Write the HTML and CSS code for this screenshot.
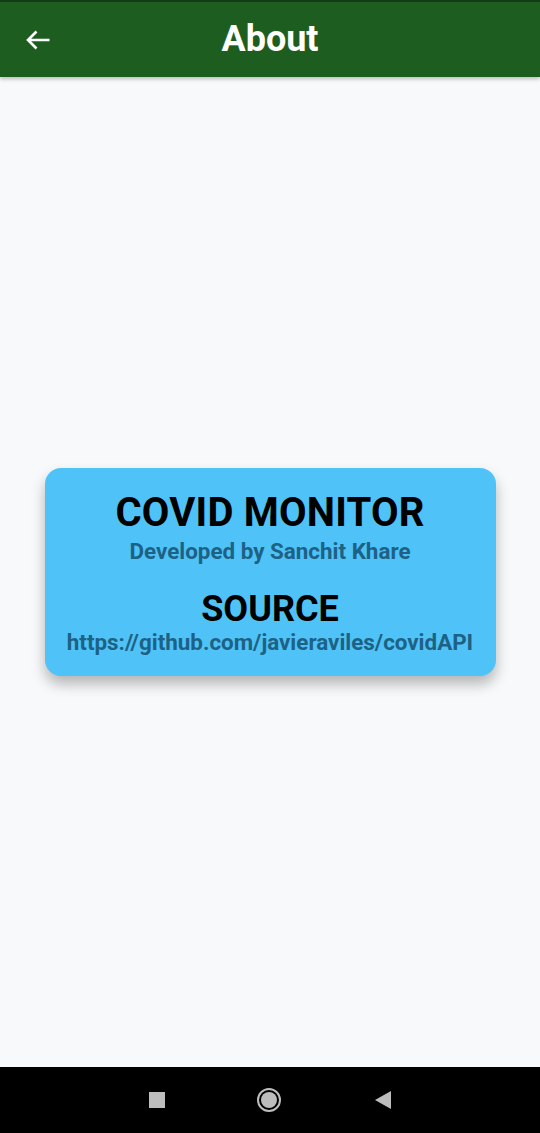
FILE: index.html
```html
<!DOCTYPE html>
<html>
<head>
<meta charset="utf-8">
<link rel="stylesheet" href="styles.css">
</head>
<body>
<div class="screen">
  <header class="appbar">
    <svg class="back" width="26" height="20" viewBox="0 0 26 20"><path d="M3 10H24.5M11.5 1.5L3 10l8.5 8.5" fill="none" stroke="#fff" stroke-width="2.6" stroke-linecap="butt" stroke-linejoin="miter"/></svg>
    <h1 class="title">About</h1>
    <span></span>
  </header>
  <main class="content">
    <div class="card">
      <div class="heading">COVID MONITOR</div>
      <div class="sub first">Developed by Sanchit Khare</div>
      <div class="heading second">SOURCE</div>
      <div class="sub last">https://github.com/javieraviles/covidAPI</div>
    </div>
  </main>
  <footer class="navbar">
    <span class="nav-square"></span>
    <span class="nav-circle"><span class="nav-dot"></span></span>
    <svg class="nav-back" width="16" height="18" viewBox="0 0 16 18"><path d="M16 0V18L0 9Z" fill="#bdbdbd"/></svg>
  </footer>
</div>
</body>
</html>
```
FILE: styles.css
```css
html, body {
  margin: 0;
  padding: 0;
}
body {
  font-family: Roboto, "Liberation Sans", sans-serif;
  background: #f8f9fa;
}
.screen {
  width: 540px;
  height: 1133px;
  display: flex;
  flex-direction: column;
}
.appbar {
  height: 77px;
  background: #1d5e20;
  border-top: 2px solid #123d14;
  box-sizing: border-box;
  display: grid;
  grid-template-columns: 1fr auto 1fr;
  align-items: start;
  box-shadow: 0 2px 4px rgba(0,0,0,0.25);
  z-index: 1;
}
.back {
  margin-left: 25px;
  margin-top: 28px;
}
.title {
  margin: 19px 0 0;
  text-align: center;
  color: #fff;
  font-size: 36px;
  font-weight: 700;
  line-height: 36px;
}
.content {
  flex: 1;
  display: flex;
  align-items: center;
  justify-content: center;
}
.card {
  width: 451px;
  height: 208px;
  box-sizing: border-box;
  background: #4fc3f7;
  border-radius: 16px;
  box-shadow: 0 8px 14px rgba(0,0,0,0.28);
  display: flex;
  flex-direction: column;
  align-items: center;
  padding-top: 25px;
}
.heading {
  font-size: 40px;
  font-weight: 700;
  line-height: 40px;
  letter-spacing: 0.2px;
  color: #000;
}
.first {
  margin-top: 6px;
}
.second {
  margin-top: 28px;
  font-size: 36px;
  line-height: 36px;
  letter-spacing: 0;
}
.last {
  margin-top: 3px;
}
.sub {
  font-size: 22.4px;
  font-weight: 700;
  line-height: 24px;
  color: #1d6185;
}
.navbar {
  height: 66px;
  background: #000;
  display: flex;
  align-items: center;
  justify-content: center;
}
.nav-square {
  width: 16px;
  height: 16px;
  background: #bdbdbd;
  margin-right: 92px;
}
.nav-circle {
  width: 24px;
  height: 24px;
  border-radius: 50%;
  border: 2px solid #bdbdbd;
  box-sizing: border-box;
  display: flex;
  align-items: center;
  justify-content: center;
  margin-right: 94px;
}
.nav-dot {
  width: 16px;
  height: 16px;
  border-radius: 50%;
  background: #bdbdbd;
}
```
